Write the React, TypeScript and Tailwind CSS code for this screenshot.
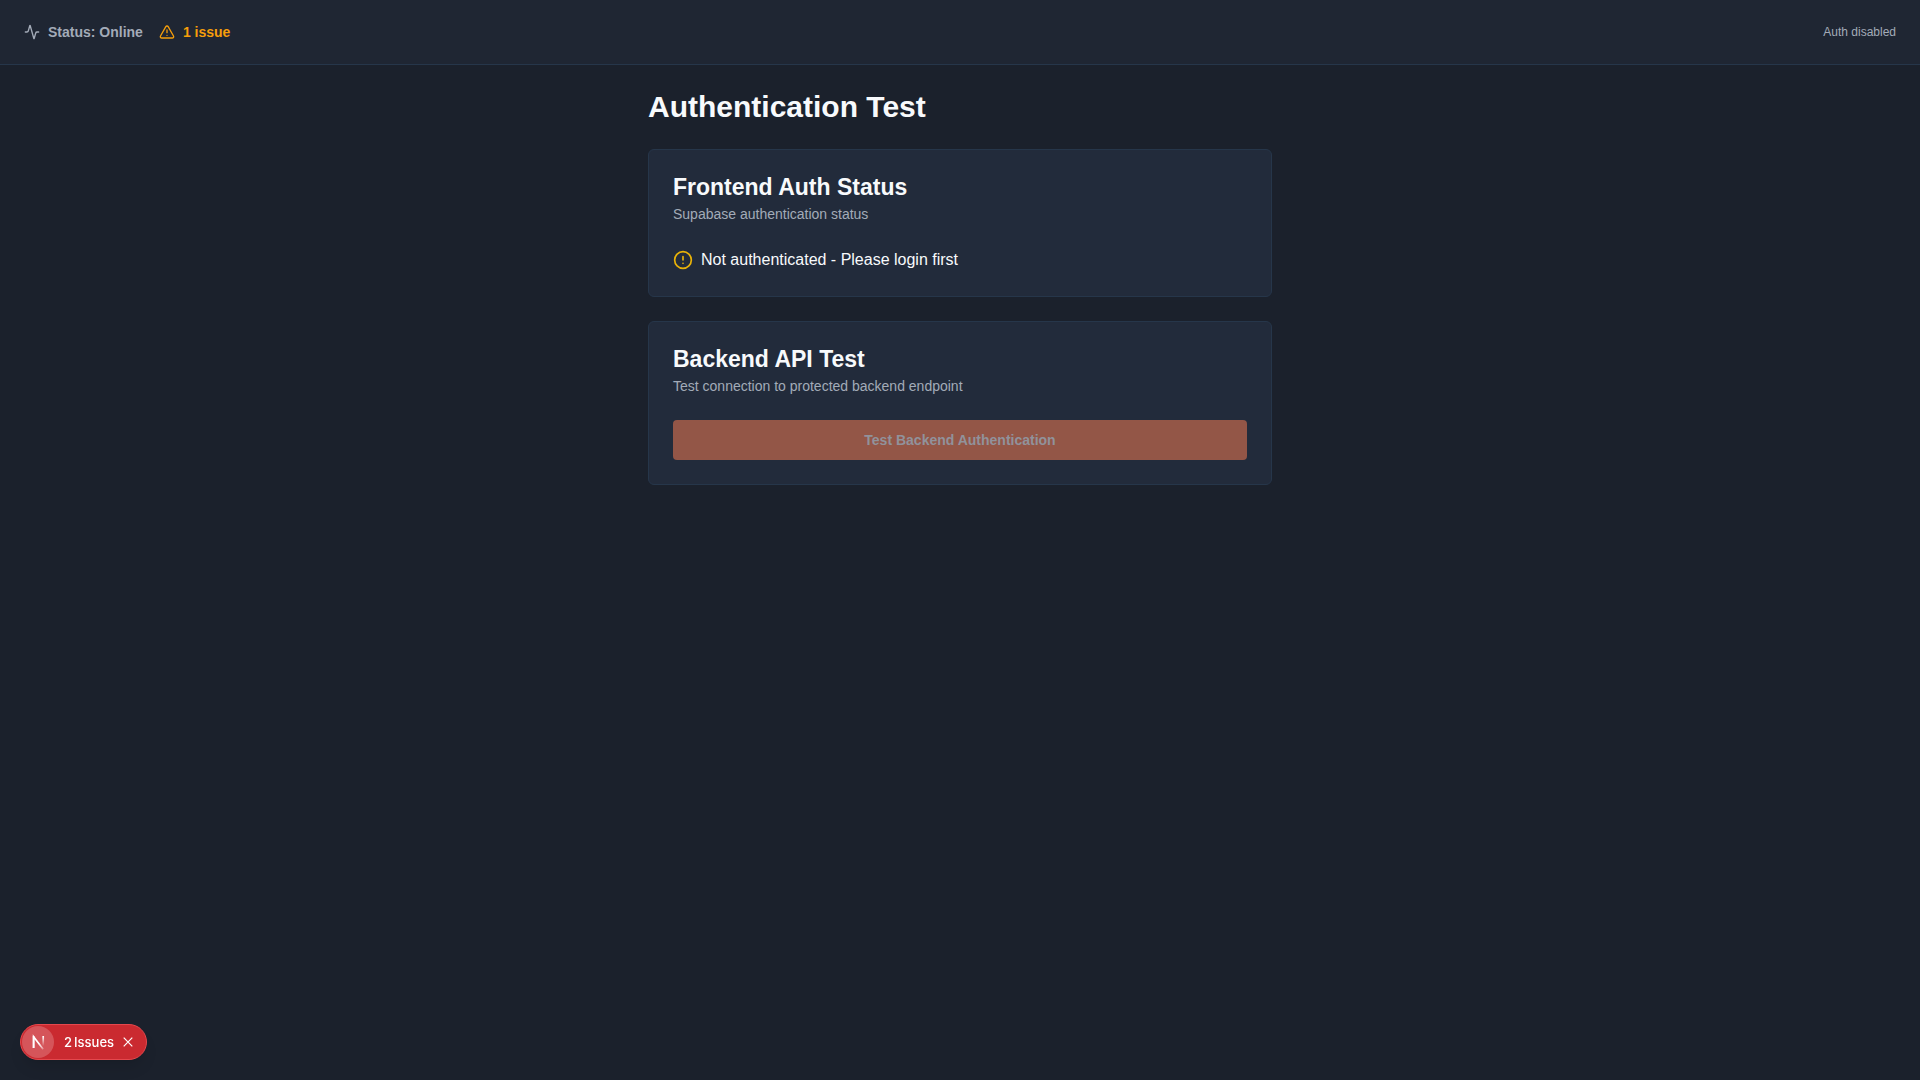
import React from "react";
import { Activity, AlertCircle, TriangleAlert } from "lucide-react";

function Card({
  title,
  description,
  children,
}: {
  title: string;
  description: string;
  children: React.ReactNode;
}) {
  return (
    <section className="rounded-md border border-[#26364a] bg-[#222b3b]">
      <div className="flex flex-col gap-1 p-6">
        <h2 className="text-[23px] leading-[26px] font-bold text-slate-50">{title}</h2>
        <p className="text-sm text-[#a3abb8]">{description}</p>
      </div>
      <div className="px-6 pb-6">{children}</div>
    </section>
  );
}

function NextLogo() {
  return (
    <svg viewBox="0 0 40 40" className="size-8" fill="none" aria-hidden="true">
      <defs>
        <linearGradient id="diagonal" x1="21" y1="22" x2="27" y2="30" gradientUnits="userSpaceOnUse">
          <stop stopColor="#fff" />
          <stop offset="0.7" stopColor="#fff" stopOpacity="0.5" />
          <stop offset="1" stopColor="#fff" stopOpacity="0.1" />
        </linearGradient>
        <linearGradient id="stem" x1="26" y1="13" x2="26" y2="25" gradientUnits="userSpaceOnUse">
          <stop stopColor="#fff" />
          <stop offset="1" stopColor="#fff" stopOpacity="0" />
        </linearGradient>
      </defs>
      <path d="M14.5 27.5V13.5L26.5 29" stroke="url(#diagonal)" strokeWidth="2.1" />
      <path d="M14.5 27.5V12.5" stroke="#fff" strokeWidth="2.1" />
      <path d="M26.5 12.5v13" stroke="url(#stem)" strokeWidth="2.1" />
    </svg>
  );
}

function IssuesBadge() {
  return (
    <div className="fixed bottom-5 left-5 flex h-9 items-center rounded-full border border-[#e5484d] bg-[#ca2a30] p-px pr-2 text-[13px] font-medium text-white shadow-lg [font-family:Inter,sans-serif]">
      <button type="button" aria-label="Open developer tools" className="flex size-8 items-center justify-center rounded-full bg-[#d5555a]">
        <NextLogo />
      </button>
      <button type="button" className="ml-2.5 flex gap-0.5 leading-4">
        <span>2</span>
        <span>Issues</span>
      </button>
      <button type="button" aria-label="Collapse issues" className="ml-1 flex size-5 items-center justify-center">
        <svg viewBox="0 0 14 14" className="size-3.5" fill="none" stroke="currentColor" strokeWidth="1.2" aria-hidden="true">
          <path d="M2.7 2.7l8.6 8.6M11.3 2.7l-8.6 8.6" />
        </svg>
      </button>
    </div>
  );
}

export default function App() {
  return (
    <div className="min-h-screen bg-[#1b212c] text-slate-50 [font-family:'Liberation_Sans',Arial,sans-serif]">
      <header className="flex items-center justify-between border-b border-[#26364a] bg-[#1f2633] px-6">
        <div className="flex h-16 items-center gap-4 text-sm font-bold">
          <div className="flex items-center gap-2 text-[#a3abb8]">
            <Activity className="size-4" strokeWidth={2} />
            <span>Status: Online</span>
          </div>
          <div className="flex items-center gap-2 text-[#f59e0b]">
            <TriangleAlert className="size-4" strokeWidth={2} />
            <span>1 issue</span>
          </div>
        </div>
        <span className="text-xs text-[#a3abb8]">Auth disabled</span>
      </header>

      <main className="mx-auto flex max-w-2xl flex-col gap-6 p-6">
        <h1 className="text-3xl font-bold">Authentication Test</h1>

        <Card title="Frontend Auth Status" description="Supabase authentication status">
          <div className="flex items-center gap-2">
            <AlertCircle className="size-5 text-[#eab308]" />
            <span>Not authenticated - Please login first</span>
          </div>
        </Card>

        <Card title="Backend API Test" description="Test connection to protected backend endpoint">
          <button
            type="button"
            disabled
            className="flex h-10 w-full items-center justify-center rounded bg-[#935647] px-4 text-sm font-bold text-[#91929b]"
          >
            Test Backend Authentication
          </button>
        </Card>
      </main>

      <IssuesBadge />
    </div>
  );
}
